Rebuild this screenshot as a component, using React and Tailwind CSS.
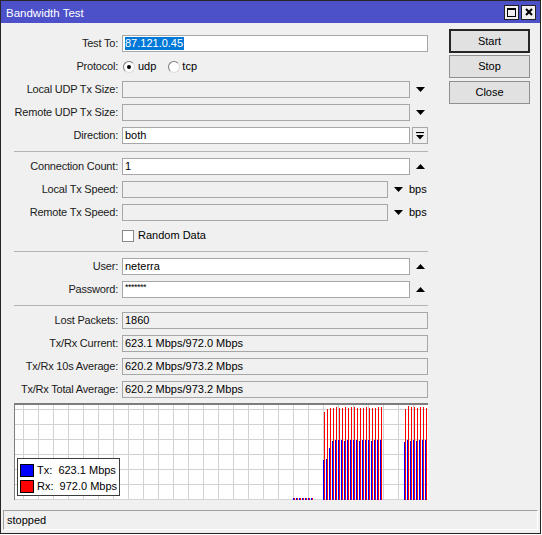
import React from "react";

const blue2 = [460, 459, 448, 441, 440, 440, 440, 441, 440, 440, 440, 440, 441, 440, 440, 440, 441, 440, 440, 440];
const red2 = [412, 409, 408, 408, 407, 408, 408, 407, 408, 407, 407, 408, 408, 408, 407, 408, 408, 408, 407, 407];
const blue3 = [442, 440, 441, 440, 441, 440, 440, 440];
const red3 = [409, 406, 407, 407, 408, 407, 407, 408];

function Down() {
  return (
    <svg width="9" height="5" viewBox="0 0 9 5">
      <path d="M0 0h9L4.5 5z" fill="#000" />
    </svg>
  );
}

function Up() {
  return (
    <svg width="9" height="5" viewBox="0 0 9 5">
      <path d="M0 5h9L4.5 0z" fill="#000" />
    </svg>
  );
}

function Label({ children }) {
  return (
    <div className="w-[104px] shrink-0 flex justify-end whitespace-nowrap mr-[4px] text-[#1a1a1a] tracking-[-0.2px]">
      {children}
    </div>
  );
}

function Row({ label, children }) {
  return (
    <div className="flex items-center h-[17px]">
      <Label>{label}</Label>
      {children}
    </div>
  );
}

function Box({ className, disabled, children }) {
  return (
    <div
      className={
        (disabled ? "bg-[#f0f0f0] " : "bg-white ") +
        "h-[17px] border border-[#a7a7a7] px-[2px] flex items-center leading-[15px] whitespace-nowrap overflow-hidden " +
        className
      }
    >
      {children}
    </div>
  );
}

function Sep() {
  return <div className="h-px bg-[#b4b4b4]" />;
}

function Chart() {
  const vlines = [];
  for (let x = 8; x < 413; x += 15) vlines.push(x);
  const hlines = [4, 19, 34, 49, 64, 79, 94];
  const bars = [];
  // tiny samples before the test
  for (let i = 0; i < 7; i++) {
    bars.push(<rect key={"tb" + i} x={278 + i * 3} y={93} width="1" height="2" fill="#0000ff" />);
    bars.push(<rect key={"tr" + i} x={279 + i * 3} y={93} width="1" height="2" fill="#ff0000" />);
  }
  blue2.forEach((t, i) => {
    bars.push(<rect key={"b2" + i} x={308 + i * 3} y={t - 405} width="1" height={500 - t} fill="#0000ff" />);
    bars.push(<rect key={"r2" + i} x={309 + i * 3} y={red2[i] - 405} width="1" height={500 - red2[i]} fill="#ff0000" />);
  });
  blue3.forEach((t, i) => {
    bars.push(<rect key={"b3" + i} x={389 + i * 3} y={t - 405} width="1" height={500 - t} fill="#0000ff" />);
    bars.push(<rect key={"r3" + i} x={390 + i * 3} y={red3[i] - 405} width="1" height={500 - red3[i]} fill="#ff0000" />);
  });
  return (
    <div className="relative mt-[5px] w-[414px] border-t-2 border-l border-[#7c7c7c] bg-white">
      <svg width="413" height="95" viewBox="0 0 413 95" className="block">
        {vlines.map((x) => (
          <line key={"v" + x} x1={x + 0.5} y1="0" x2={x + 0.5} y2="95" stroke="#d2d2d2" strokeWidth="1" />
        ))}
        {hlines.map((y) => (
          <line key={"h" + y} x1="0" y1={y + 0.5} x2="413" y2={y + 0.5} stroke="#d2d2d2" strokeWidth="1" />
        ))}
        {bars}
      </svg>
      <div className="absolute left-[2px] top-[53px] w-[103px] h-[38px] bg-white border border-[#3c3c3c] flex flex-col pl-[2px] pt-[3px]">
        <div className="flex items-center h-[16px]">
          <span className="w-[14px] h-[13px] bg-[#0000ff] border border-black" />
          <span className="ml-[3px] whitespace-pre">{"Tx:  623.1 Mbps"}</span>
        </div>
        <div className="flex items-center h-[16px]">
          <span className="w-[14px] h-[13px] bg-[#ff0000] border border-black" />
          <span className="ml-[3px] whitespace-pre">{"Rx:  972.0 Mbps"}</span>
        </div>
      </div>
    </div>
  );
}

function Btn({ children, primary }) {
  return (
    <div
      className={
        (primary ? "h-[24px] border-2 border-[#262626] " : "h-[23px] border border-[#8f8f8f] ") +
        "w-[81px] bg-[#e1e1e1] flex items-center justify-center text-black"
      }
    >
      {children}
    </div>
  );
}

export default function App() {
  return (
    <div className="w-[541px] h-[534px] border border-[#262626] bg-[#f0f0f0] flex flex-col font-['Liberation_Sans',Arial,sans-serif] text-[11px] text-black overflow-hidden">
      {/* title bar */}
      <div className="h-[22px] shrink-0 bg-[#4c50c9] flex items-center pl-[5px] pr-[4px]">
        <span className="text-white text-[11.5px] pt-[3px]">Bandwidth Test</span>
        <div className="ml-auto flex gap-[2px]">
          <div className="w-[15px] h-[15px] bg-[#f0f0f0] border border-[#222] flex items-center justify-center">
            <span className="w-[9px] h-[9px] border border-black border-t-2" />
          </div>
          <div className="w-[15px] h-[15px] bg-[#f0f0f0] border border-[#222] flex items-center justify-center">
            <svg width="8" height="8" viewBox="0 0 8 8">
              <path d="M1 1L7 7M7 1L1 7" stroke="#000" strokeWidth="2" />
            </svg>
          </div>
        </div>
      </div>

      <div className="flex">
        {/* form column */}
        <div className="ml-[13px] w-[414px] pt-[12px] flex flex-col">
          <Row label="Test To:">
            <Box className="w-[306px]">
              <span className="bg-[#0078d7] text-white leading-[13px] pr-px">87.121.0.45</span>
            </Box>
          </Row>
          <div className="mt-[6px] flex items-center h-[17px]">
            <Label>Protocol:</Label>
            <span className="w-[12px] h-[12px] rounded-full border border-[#7a7a7a] border-r-[#dcdcdc] border-b-[#dcdcdc] bg-white flex items-center justify-center ml-px">
              <span className="w-[4px] h-[4px] rounded-full bg-black" />
            </span>
            <span className="ml-[3px]">udp</span>
            <span className="ml-[12px] w-[12px] h-[12px] rounded-full border border-[#7a7a7a] border-r-[#dcdcdc] border-b-[#dcdcdc] bg-white" />
            <span className="ml-[2px]">tcp</span>
          </div>
          <div className="mt-[6px]">
            <Row label="Local UDP Tx Size:">
              <Box disabled className="w-[288px]" />
              <span className="ml-[6px] flex"><Down /></span>
            </Row>
          </div>
          <div className="mt-[6px]">
            <Row label="Remote UDP Tx Size:">
              <Box disabled className="w-[288px]" />
              <span className="ml-[6px] flex"><Down /></span>
            </Row>
          </div>
          <div className="mt-[6px]">
            <Row label="Direction:">
              <Box className="w-[288px]">both</Box>
              <div className="ml-[2px] w-[16px] h-[17px] border border-[#a7a7a7] bg-[#f0f0f0] flex items-center justify-center">
                <svg width="8" height="8" viewBox="0 0 8 8">
                  <path d="M0 0.5h8" stroke="#000" strokeWidth="1.2" />
                  <path d="M0 3h8L4 7.5z" fill="#000" />
                </svg>
              </div>
            </Row>
          </div>

          <div className="mt-[7px]"><Sep /></div>

          <div className="mt-[6px]">
            <Row label="Connection Count:">
              <Box className="w-[288px]">1</Box>
              <span className="ml-[6px] flex"><Up /></span>
            </Row>
          </div>
          <div className="mt-[6px]">
            <Row label="Local Tx Speed:">
              <Box disabled className="w-[266px]" />
              <span className="ml-[6px] flex"><Down /></span>
              <span className="ml-[6px]">bps</span>
            </Row>
          </div>
          <div className="mt-[6px]">
            <Row label="Remote Tx Speed:">
              <Box disabled className="w-[266px]" />
              <span className="ml-[6px] flex"><Down /></span>
              <span className="ml-[6px]">bps</span>
            </Row>
          </div>
          <div className="mt-[6px] flex items-center h-[17px] pl-[108px]">
            <span className="w-[12px] h-[12px] bg-white border border-[#8a8a8a]" />
            <span className="ml-[4px]">Random Data</span>
          </div>

          <div className="mt-[7px]"><Sep /></div>

          <div className="mt-[6px]">
            <Row label="User:">
              <Box className="w-[288px]">neterra</Box>
              <span className="ml-[6px] flex"><Up /></span>
            </Row>
          </div>
          <div className="mt-[6px]">
            <Row label="Password:">
              <Box className="w-[288px]">
                <span className="text-[9px] self-start leading-[10px] tracking-[-0.5px]">*******</span>
              </Box>
              <span className="ml-[6px] flex"><Up /></span>
            </Row>
          </div>

          <div className="mt-[7px]"><Sep /></div>

          <div className="mt-[6px]">
            <Row label="Lost Packets:">
              <Box disabled className="w-[306px]">1860</Box>
            </Row>
          </div>
          <div className="mt-[6px]">
            <Row label="Tx/Rx Current:">
              <Box disabled className="w-[306px]">623.1 Mbps/972.0 Mbps</Box>
            </Row>
          </div>
          <div className="mt-[6px]">
            <Row label="Tx/Rx 10s Average:">
              <Box disabled className="w-[306px]">620.2 Mbps/973.2 Mbps</Box>
            </Row>
          </div>
          <div className="mt-[6px]">
            <Row label="Tx/Rx Total Average:">
              <Box disabled className="w-[306px]">620.2 Mbps/973.2 Mbps</Box>
            </Row>
          </div>

          <Chart />
        </div>

        {/* button column */}
        <div className="ml-[21px] pt-[6px] flex flex-col">
          <Btn primary>Start</Btn>
          <div className="mt-[2px]"><Btn>Stop</Btn></div>
          <div className="mt-[3px]"><Btn>Close</Btn></div>
        </div>
      </div>

      {/* status bar */}
      <div className="mt-[10px] mx-[2px] h-[20px] border-t border-l border-[#a0a0a0] border-b border-r border-b-white border-r-white flex items-center pl-[3px]">
        stopped
      </div>
    </div>
  );
}
